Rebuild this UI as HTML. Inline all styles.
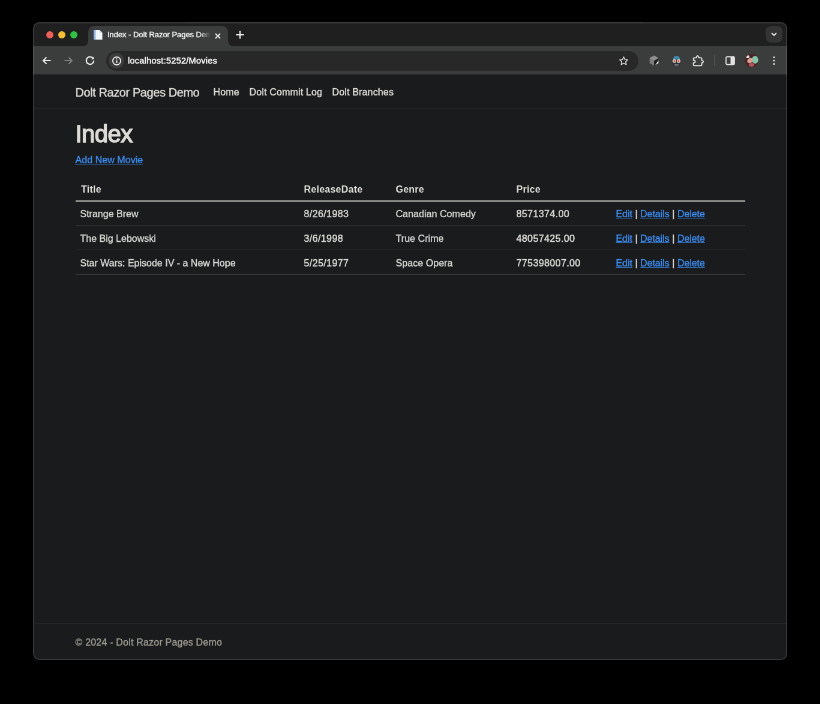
<!DOCTYPE html>
<html>
<head>
<meta charset="utf-8">
<title>Index - Dolt Razor Pages Demo</title>
<style>
:root{
  --margin:#000000;
  --frame:#1f1f1f;
  --toolbar:#3b3c3c;
  --omni:#282828;
  --page:#191b1c;
  --text:#d6d4d0;
  --link:#3b8cf0;
  --line:#35393b;
}
*{box-sizing:border-box;}
html,body{margin:0;padding:0;}
body{width:820px;height:704px;overflow:hidden;background:var(--margin);font-family:"Liberation Sans",sans-serif;position:relative;}
#stage{position:absolute;left:0;top:0;width:1366.67px;height:1173.33px;transform:scale(0.6);transform-origin:0 0;will-change:transform;}
#win{position:absolute;left:55px;top:36.667px;width:1256.667px;height:1063.333px;border-radius:10px;background:var(--page);overflow:hidden;}
#inner{position:absolute;left:1px;top:.833px;width:1255px;height:1061.3px;}
.fill{position:absolute;left:0;width:100%;}
#rim{position:absolute;left:0;top:0;width:100%;height:100%;border-radius:10px;border:2px solid rgba(255,255,255,.125);z-index:9;}
/* ---------- browser chrome ---------- */
#tabstrip{position:absolute;left:0;top:0;width:100%;height:40px;background:var(--frame);}
.tl{position:absolute;top:14.5px;width:12.4px;height:12.4px;border-radius:50%;}
#tab{position:absolute;left:91px;top:5.5px;width:233px;height:35px;background:var(--toolbar);border-radius:10px 10px 0 0;}
#tab:before,#tab:after{content:"";position:absolute;bottom:0;width:10px;height:10px;}
#tab:before{left:-10px;background:radial-gradient(circle at 0 0,rgba(0,0,0,0) 9.5px,var(--toolbar) 10px);}
#tab:after{right:-10px;background:radial-gradient(circle at 100% 0,rgba(0,0,0,0) 9.5px,var(--toolbar) 10px);}
#tabtitle{-webkit-text-stroke:.5px currentColor;position:absolute;left:32px;top:5.800px;width:174px;height:18px;overflow:hidden;white-space:nowrap;font-size:13px;line-height:18px;color:#f0f0f0;letter-spacing:-.05px;
  -webkit-mask-image:linear-gradient(90deg,#000 88%,transparent 99%);mask-image:linear-gradient(90deg,#000 88%,transparent 99%);}
#toolbar{position:absolute;left:0;top:40px;width:100%;height:47px;background:var(--toolbar);}
#omni{position:absolute;left:121px;top:7.5px;width:887px;height:33px;border-radius:17px;background:var(--omni);}
#siteinfo{position:absolute;left:4px;top:3.5px;width:26px;height:26px;border-radius:50%;background:#3c3c3c;}
#url{position:absolute;left:36px;top:7px;font-size:14.500px;line-height:19px;color:#f4f4f4;white-space:nowrap;letter-spacing:.27px;-webkit-text-stroke:.55px currentColor;}
.ico{position:absolute;}
/* ---------- page ---------- */
#view{-webkit-text-stroke:.45px currentColor;letter-spacing:.06px;position:absolute;left:0;top:87px;width:100%;height:974.3px;background:var(--page);color:var(--text);font-size:16px;line-height:24px;}
#nav{position:absolute;left:0;top:0;width:100%;height:57.600px;border-bottom:1px solid var(--line);}
.container{position:absolute;left:57.5px;width:1140px;padding:0 12px;}
#brand{position:absolute;left:12px;top:14.700px;font-size:20px;line-height:30px;white-space:nowrap;color:#dddad6;letter-spacing:-.42px;}
.nl{position:absolute;top:17.700px;font-size:16px;line-height:24px;white-space:nowrap;color:#dddad6;}
h1{position:absolute;left:12px;top:75px;margin:0;font-size:40px;line-height:48px;font-weight:400;color:#dcdad6;letter-spacing:-.5px;-webkit-text-stroke:1.700px currentColor;}
a{color:var(--link);text-decoration:underline;}
#addnew{position:absolute;left:12px;top:130.800px;white-space:nowrap;}
table{position:absolute;left:12px;top:169px;width:1116px;border-collapse:collapse;table-layout:fixed;}
th,td{padding:9.800px 8px 6.200px 8px;height:41px;text-align:left;white-space:nowrap;border-bottom:1px solid var(--line);font-weight:400;}
th{font-weight:700;color:#e0deda;border-bottom:2px solid transparent;padding-top:10.800px;padding-bottom:5.200px;-webkit-text-stroke:0;letter-spacing:.25px;}
.num{letter-spacing:.4px;-webkit-text-stroke:.6px currentColor;}
.nl{letter-spacing:.16px;}
td a{letter-spacing:-.05px;}
td:first-child{letter-spacing:0;}
th:first-child{padding-left:9.5px;}
#hrule{position:absolute;left:12px;top:209.300px;width:1116px;height:2.100px;background:#bdbbb7;}
#footer{position:absolute;left:0;bottom:0;width:100%;height:61.200px;border-top:1px solid var(--line);color:#9b978f;line-height:60px;}
#footer span{position:absolute;left:69.5px;top:2.500px;white-space:nowrap;letter-spacing:.2px;}
</style>
</head>
<body>
<div id="stage">
 <div id="win">
  <div class="fill" style="top:0;height:41.500px;background:var(--frame)"></div>
  <div class="fill" style="top:41px;height:47px;background:var(--toolbar)"></div>
  <div id="rim"></div>
  <div id="inner">
  <div id="tabstrip">
   <div class="tl" style="left:21px;background:#ee5f58"></div>
   <div class="tl" style="left:41px;background:#f6be30"></div>
   <div class="tl" style="left:61px;background:#2ec243"></div>
   <div id="tab">
    <svg class="ico" style="left:8px;top:6.500px" width="17" height="18" viewBox="0 0 18 20" preserveAspectRatio="none"><path d="M1.5 1h10l5 5v13h-15z" fill="#f4f6fa"/><path d="M1.5 1h3.2v18H1.5z" fill="#8fb5ee"/><path d="M11.5 1v5h5z" fill="#c9d2e0"/></svg>
    <div id="tabtitle">Index - Dolt Razor Pages Demo</div>
    <svg class="ico" style="left:208px;top:9px" width="16" height="16" viewBox="0 0 16 16"><path d="M4 4l8 8M12 4l-8 8" stroke="#ececec" stroke-width="2" fill="none"/></svg>
   </div>
   <svg class="ico" style="left:335px;top:12px" width="18" height="18" viewBox="0 0 18 18"><path d="M9 2.500v13M2.500 9h13" stroke="#ececec" stroke-width="2.200" fill="none"/></svg>
   <div class="ico" style="left:1220px;top:6px;width:28px;height:28px;border-radius:9px;background:#343434"></div>
   <svg class="ico" style="left:1226px;top:12px" width="16" height="16" viewBox="0 0 16 16"><path d="M4 6l4 4 4-4" stroke="#e8e8e8" stroke-width="1.9" fill="none"/></svg>
  </div>
  <div id="toolbar">
   <svg class="ico" style="left:12px;top:14px" width="20" height="20" viewBox="0 0 20 20"><path d="M16.5 10H4.5M9.5 4.5L4 10l5.5 5.5" stroke="#ececec" stroke-width="2.200" fill="none"/></svg>
   <svg class="ico" style="left:48px;top:14px" width="20" height="20" viewBox="0 0 20 20"><path d="M3.5 10h12M10.5 4.5L16 10l-5.500 5.5" stroke="#808080" stroke-width="2.100" fill="none"/></svg>
   <svg class="ico" style="left:84px;top:14px" width="20" height="20" viewBox="0 0 20 20"><path d="M15.6 7.2A6.2 6.2 0 1 0 16.2 10" stroke="#ececec" stroke-width="2.200" fill="none"/><path d="M16.4 3.2v4.6h-4.600z" fill="#e3e3e3"/></svg>
   <div id="omni">
    <div id="siteinfo"></div>
    <svg class="ico" style="left:8.500px;top:8px" width="17" height="17" viewBox="0 0 17 17"><circle cx="8.5" cy="8.5" r="6.600" stroke="#ececec" stroke-width="1.900" fill="none"/><path d="M8.5 7.500v4.400" stroke="#ececec" stroke-width="2"/><circle cx="8.5" cy="5.200" r="1.150" fill="#ececec"/></svg>
    <div id="url">localhost:5252/Movies</div>
    <svg class="ico" style="left:853px;top:7px" width="19" height="19" viewBox="0 0 24 24"><path d="M12 3.600l2.550 5.500 5.950.700-4.400 4.100 1.150 5.900L12 16.850 6.750 19.800l1.150-5.900-4.400-4.100 5.950-.700z" stroke="#e3e3e3" stroke-width="1.900" fill="none" stroke-linejoin="round"/></svg>
   </div>
   <!-- extension icons -->
   <svg class="ico" style="left:1024px;top:14px" width="20" height="20" viewBox="0 0 20 20"><path d="M10 1.500l7.400 4.200v8.600L10 18.500l-7.400-4.200V5.700z" fill="#7b7b7b"/><path d="M10 10l7.400-4.300v8.600L10 18.500z" fill="#1d1d1d"/><path d="M17.400 9.500v4.800L12 17.400z" fill="#ededed"/><path d="M10 1.500l7.400 4.200L10 10 2.600 5.700z" fill="#8e8e8e"/></svg>
   <svg class="ico" style="left:1061px;top:13.500px" width="21" height="21" viewBox="0 0 22 22"><path d="M5 8.500C5 4.500 7.500 2 11 2s6 2.500 6 6.500z" fill="#3f87a8"/><path d="M4.500 8h13v6.500c0 3-2.500 5.500-6.500 5.500s-6.500-2.500-6.500-5.500z" fill="#2c3036"/><circle cx="7.400" cy="11.300" r="3.100" fill="#e9e9e9"/><circle cx="14.600" cy="11.300" r="3.100" fill="#e9e9e9"/><circle cx="7.400" cy="11.300" r="1.800" fill="#e0522f"/><circle cx="14.600" cy="11.300" r="1.800" fill="#e0522f"/><path d="M7 16.500h8l-1.200 3.200H8.200z" fill="#6b6f75"/></svg>
   <svg class="ico" style="left:1096.500px;top:13.500px" width="21" height="21" viewBox="0 0 24 24"><path d="M19.500 11.200H19V7.500c0-.8-.7-1.500-1.500-1.500h-4.300V4.700C13.200 3.500 12.200 2.500 11 2.500S8.800 3.500 8.800 4.700V6H4.500C3.700 6 3 6.700 3 7.500v3.300h1c1.300 0 2.400 1.100 2.400 2.400S5.300 15.600 4 15.600H3v3.900c0 .8.700 1.500 1.500 1.500h13c.8 0 1.500-.7 1.500-1.500v-3.900h.5c1.200 0 2.200-1 2.200-2.200s-1-2.200-2.200-2.200z" stroke="#ececec" stroke-width="2" fill="none" stroke-linejoin="round"/></svg>
   <div class="ico" style="left:1133.500px;top:15px;width:1.500px;height:18px;background:#585858"></div>
   <svg class="ico" style="left:1151px;top:14px" width="20" height="20" viewBox="0 0 20 20"><rect x="3" y="3.500" width="14" height="13" rx="2" stroke="#e3e3e3" stroke-width="1.800" fill="none"/><rect x="10.500" y="3.500" width="6.500" height="13" fill="#e3e3e3"/></svg>
   <div class="ico" style="left:1185.500px;top:12.500px;width:22px;height:22px;border-radius:50%;overflow:hidden;background:#4a2328"><div style="position:absolute;left:11px;top:3px;width:11px;height:13px;border-radius:50%;background:#7fc4a4"></div><div style="position:absolute;left:3px;top:7px;width:10px;height:8px;border-radius:50%;background:#dba08f;transform:rotate(-35deg)"></div><div style="position:absolute;left:1px;top:2px;width:6px;height:5px;border-radius:50%;background:#efe6e2"></div><div style="position:absolute;left:6px;top:15px;width:9px;height:6px;border-radius:50%;background:#b5565a"></div></div>
   <svg class="ico" style="left:1224px;top:14px" width="20" height="20" viewBox="0 0 20 20"><circle cx="10" cy="4.500" r="1.600" fill="#e3e3e3"/><circle cx="10" cy="10" r="1.600" fill="#e3e3e3"/><circle cx="10" cy="15.500" r="1.600" fill="#e3e3e3"/></svg>
  </div>
  <div id="view">
   <div id="nav">
    <div class="container" style="top:0;height:56px">
     <div id="brand">Dolt Razor Pages Demo</div>
     <div class="nl" style="left:242px">Home</div>
     <div class="nl" style="left:302px">Dolt Commit Log</div>
     <div class="nl" style="left:440px">Dolt Branches</div>
    </div>
   </div>
   <div class="container" style="top:0;height:600px">
    <h1>Index</h1>
    <div id="addnew"><a>Add New Movie</a></div>
    <div id="hrule"></div>
    <table>
     <colgroup><col style="width:373px"><col style="width:153px"><col style="width:201px"><col style="width:166px"><col></colgroup>
     <tr><th>Title</th><th>ReleaseDate</th><th>Genre</th><th>Price</th><th></th></tr>
     <tr><td>Strange Brew</td><td class="num">8/26/1983</td><td>Canadian Comedy</td><td class="num">8571374.00</td><td><a>Edit</a> | <a>Details</a> | <a>Delete</a></td></tr>
     <tr><td>The Big Lebowski</td><td class="num">3/6/1998</td><td>True Crime</td><td class="num">48057425.00</td><td><a>Edit</a> | <a>Details</a> | <a>Delete</a></td></tr>
     <tr><td>Star Wars: Episode IV - a New Hope</td><td class="num">5/25/1977</td><td>Space Opera</td><td class="num">775398007.00</td><td><a>Edit</a> | <a>Details</a> | <a>Delete</a></td></tr>
    </table>
   </div>
   <div id="footer"><span>&copy; 2024 - Dolt Razor Pages Demo</span></div>
  </div>
  </div>
 </div>
</div>
</body>
</html>
